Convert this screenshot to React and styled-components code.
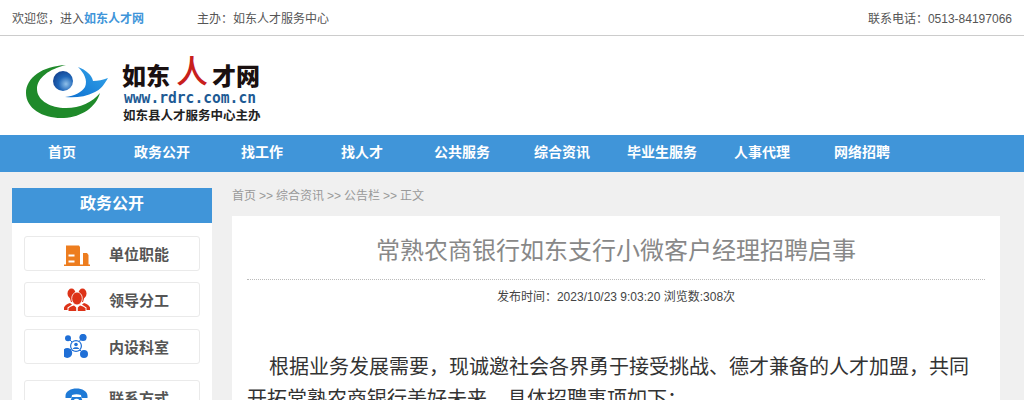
import React from "react";
import styled, { createGlobalStyle } from "styled-components";

const GlobalStyle = createGlobalStyle`
  html, body {
    margin: 0;
    padding: 0;
    height: 400px;
    overflow: hidden;
    background: #f0f0f0;
    font-family: "Liberation Sans", "Noto Sans CJK SC", sans-serif;
  }
`;

const TopBar = styled.div`
  display: flex;
  align-items: center;
  height: 35px;
  padding: 0 12px;
  background: #fff;
  border-bottom: 1px solid #ccc;
  font-size: 12px;
  color: #555;
`;

const Welcome = styled.span`
  width: 185px;
`;

const SiteName = styled.b`
  color: #4095d9;
`;

const Phone = styled.span`
  margin-left: auto;
`;

const Header = styled.div`
  height: 99px;
  background: #fff;
`;

const Nav = styled.div`
  display: flex;
  height: 37px;
  padding: 0 12px;
  background: #4095d9;
`;

const NavItem = styled.a`
  width: 100px;
  line-height: 34px;
  text-align: center;
  font-size: 14px;
  font-weight: bold;
  color: #fff;
`;

const Page = styled.div`
  display: flex;
  gap: 20px;
  padding: 16px 24px 0 12px;
`;

const Side = styled.div`
  flex: 0 0 200px;
  background: #fff;
`;

const SideTitle = styled.div`
  height: 35px;
  line-height: 31px;
  margin-bottom: 13px;
  text-align: center;
  font-size: 16px;
  font-weight: bold;
  color: #fff;
  background: #4095d9;
`;

const SideItem = styled.a`
  display: flex;
  align-items: center;
  gap: 19px;
  box-sizing: border-box;
  height: 35px;
  margin: 0 12px ${(p) => p.$after}px;
  padding-left: 39px;
  border: 1px solid #eaeaea;
  border-radius: 3px;
  font-size: 15px;
  font-weight: bold;
  color: #555;
`;

const ItemIcon = styled.svg`
  flex: 0 0 26px;
  width: 26px;
  height: 26px;
`;

const Main = styled.div`
  flex: 1;
`;

const Crumbs = styled.div`
  height: 28px;
  line-height: 17px;
  font-size: 12px;
  word-spacing: -0.33px;
  color: #999;
`;

const Article = styled.div`
  padding: 15px 15px 30px;
  background: #fff;
`;

const Title = styled.h1`
  margin: 0;
  height: 48px;
  line-height: 40px;
  text-align: center;
  font-size: 24px;
  font-weight: normal;
  color: #888;
  border-bottom: 1px dotted #bbb;
`;

const Meta = styled.div`
  margin-top: 8px;
  line-height: 18px;
  text-align: center;
  font-size: 12px;
  color: #444;
`;

const Body = styled.p`
  margin: 45px 0 0;
  text-indent: 22px;
  line-height: 32px;
  font-size: 20px;
  color: #333;
`;

const Logo = () => (
  <svg width="280" height="99" viewBox="0 36 280 99">
    <defs>
      <radialGradient id="ball" cx="0.65" cy="0.65" r="0.75">
        <stop offset="0" stopColor="#8fc0ea" />
        <stop offset="0.5" stopColor="#1f66b8" />
        <stop offset="1" stopColor="#123f8c" />
      </radialGradient>
      <linearGradient id="bird" x1="0" y1="1" x2="1" y2="0">
        <stop offset="0" stopColor="#0c6fd0" />
        <stop offset="1" stopColor="#35a6ea" />
      </linearGradient>
    </defs>
    <path
      d="M66 65 C42 66 26 78 26 93 C26 109 44 119 64 118 C82 117 96 107 100 93 C92 103 78 109 63 108 C48 107 37 99 37 89 C37 78 49 69 66 65 Z"
      fill="#1f8a2a"
    />
    <circle cx="63" cy="81" r="10" fill="url(#ball)" />
    <path
      d="M78 67 C86 70 92 75 93 81 C98 81 103 80 108 78 C104 85 100 90 95 92 C85 97 75 98 65 97 C75 96 82 92 85 87 C88 80 84 73 78 67 Z"
      fill="url(#bird)"
    />
    <g fontFamily="'Noto Sans CJK SC', sans-serif" fontWeight="900" fill="#1a1010">
      <text x="122" y="85" fontSize="24">如东</text>
      <text x="212" y="85" fontSize="24">才网</text>
    </g>
    <text x="176" y="83" fontFamily="'Noto Sans CJK SC', sans-serif" fontSize="32" fontWeight="500" fill="#c8201c">人</text>
    <text x="124" y="103" fontFamily="'DejaVu Sans Mono', monospace" fontSize="15" fontWeight="bold" fill="#1d5a94" textLength="132" lengthAdjust="spacingAndGlyphs">www.rdrc.com.cn</text>
    <text x="123" y="120" fontFamily="'Noto Sans CJK SC', sans-serif" fontSize="12.5" fontWeight="bold" fill="#222">如东县人才服务中心主办</text>
  </svg>
);

const BuildingIcon = () => (
  <ItemIcon viewBox="0 0 26 26">
    <path d="M2 4.5 L15 4.5 L16 6 L16 24 L2 24 Z" fill="#ed7d1f" />
    <path d="M19 12 L23 12 L24.5 14 L24.5 24 L19 24 Z" fill="#ed7d1f" />
    <rect x="0" y="23.5" width="26" height="1.5" fill="#ed7d1f" />
    <rect x="4.5" y="13.5" width="6" height="2" fill="#fff" />
    <rect x="4.5" y="19.5" width="6" height="2" fill="#fff" />
  </ItemIcon>
);

const LeadersIcon = () => (
  <ItemIcon viewBox="0 0 26 26">
    <g fill="#dd3318">
      <ellipse cx="7.5" cy="6.5" rx="4" ry="5" />
      <ellipse cx="18.5" cy="6.5" rx="4" ry="5" />
      <path d="M5.5 10 L9.5 10 L8 15 L7 15 Z" />
      <path d="M16.5 10 L20.5 10 L19 15 L18 15 Z" />
      <path d="M0 23 L0 20.5 C1 18 3 17 6 16 L8 17.5 L3.5 20.5 L3.5 23 Z" />
      <path d="M26 23 L26 20.5 C25 18 23 17 20 16 L18 17.5 L22.5 20.5 L22.5 23 Z" />
      <ellipse cx="13" cy="11.5" rx="5.3" ry="6.5" stroke="#fff" strokeWidth="0.8" />
      <path d="M4.5 24 L4.5 21.5 C6 19.5 8 19 10 18.5 L12.2 20.5 L12.2 24 Z" />
      <path d="M21.5 24 L21.5 21.5 C20 19.5 18 19 16 18.5 L13.8 20.5 L13.8 24 Z" />
    </g>
  </ItemIcon>
);

const NetworkIcon = () => (
  <ItemIcon viewBox="0 0 26 26">
    <g stroke="#1f6fd6" strokeWidth="1">
      <line x1="4" y1="4" x2="20" y2="20" />
      <line x1="19" y1="3.5" x2="3" y2="19" />
    </g>
    <g fill="#1f6fd6">
      <circle cx="4" cy="4.2" r="3" />
      <circle cx="19" cy="3.5" r="3.6" />
      <circle cx="3.2" cy="19" r="5" />
      <circle cx="20" cy="20" r="4" />
      <circle cx="12" cy="12" r="6" />
    </g>
    <circle cx="12" cy="12" r="4.8" fill="#fff" />
    <circle cx="12" cy="10.5" r="1.8" fill="#1f6fd6" />
    <path d="M8.8 15 C8.8 12.6 15.2 12.6 15.2 15 Z" fill="#1f6fd6" />
  </ItemIcon>
);

const PhoneIcon = () => (
  <ItemIcon viewBox="0 0 26 26">
    <g fill="#1f7ad6">
      <path d="M1.5 11 C1.5 6 7 3.5 12.5 3.5 C18 3.5 23.5 6 23.5 11 L23.5 13 L17.5 13 L17 10 C14 9 11 9 8 10 L7.5 13 L1.5 13 Z" />
      <path d="M8 12 L17 12 L22 24 L3 24 Z" />
    </g>
    <circle cx="12.5" cy="17" r="3.2" fill="#fff" />
  </ItemIcon>
);

const navItems = ["首页", "政务公开", "找工作", "找人才", "公共服务", "综合资讯", "毕业生服务", "人事代理", "网络招聘"];

const sideItems = [
  { label: "单位职能", icon: <BuildingIcon />, after: 11 },
  { label: "领导分工", icon: <LeadersIcon />, after: 12 },
  { label: "内设科室", icon: <NetworkIcon />, after: 16 },
  { label: "联系方式", icon: <PhoneIcon />, after: 12 },
];

export default function App() {
  return (
    <>
      <GlobalStyle />
      <TopBar>
        <Welcome>
          欢迎您，进入<SiteName>如东人才网</SiteName>
        </Welcome>
        <span>主办：如东人才服务中心</span>
        <Phone>联系电话：0513-84197066</Phone>
      </TopBar>
      <Header>
        <Logo />
      </Header>
      <Nav>
        {navItems.map((item) => (
          <NavItem key={item}>{item}</NavItem>
        ))}
      </Nav>
      <Page>
        <Side>
          <SideTitle>政务公开</SideTitle>
          {sideItems.map((item) => (
            <SideItem key={item.label} $after={item.after}>
              {item.icon}
              {item.label}
            </SideItem>
          ))}
        </Side>
        <Main>
          <Crumbs>首页 &gt;&gt; 综合资讯 &gt;&gt; 公告栏 &gt;&gt; 正文</Crumbs>
          <Article>
            <Title>常熟农商银行如东支行小微客户经理招聘启事</Title>
            <Meta>发布时间：2023/10/23 9:03:20 浏览数:308次</Meta>
            <Body>
              根据业务发展需要，现诚邀社会各界勇于接受挑战、德才兼备的人才加盟，共同开拓常熟农商银行美好未来。具体招聘事项如下：
            </Body>
          </Article>
        </Main>
      </Page>
    </>
  );
}
